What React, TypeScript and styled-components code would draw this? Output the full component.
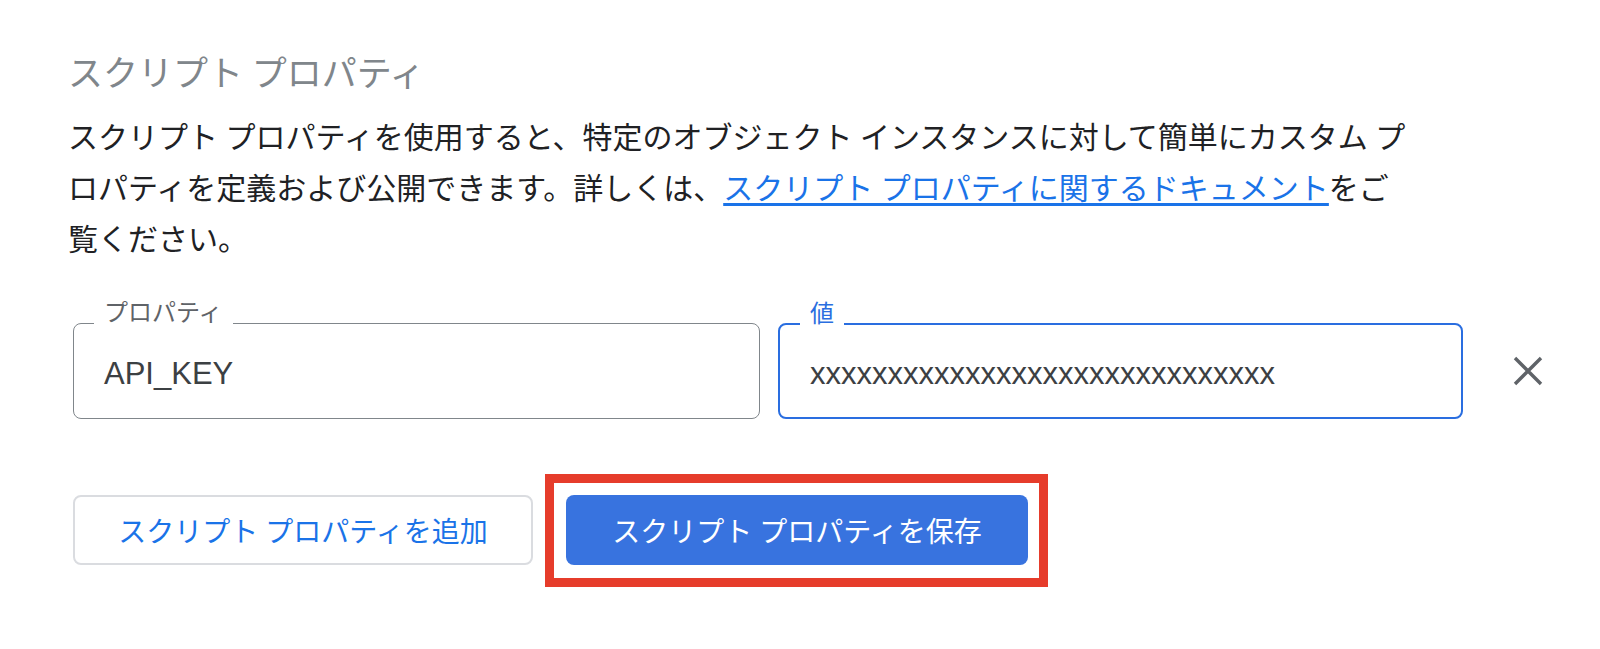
import React from 'react';
import styled, { createGlobalStyle } from 'styled-components';

const GlobalStyle = createGlobalStyle`
  body {
    margin: 0;
    background: #ffffff;
    font-family: Roboto, "Noto Sans CJK JP", sans-serif;
  }
`;

const Page = styled.div`
  box-sizing: border-box;
  min-height: 649px;
  padding: 54px 0 60px 68px;
`;

const Title = styled.h2`
  margin: 0;
  font-size: 35px;
  font-weight: 400;
  line-height: 1.2;
  color: #80868b;
`;

const Description = styled.p`
  margin: 16px 0 0;
  width: 1350px;
  font-size: 30px;
  line-height: 51px;
  color: #202124;
`;

const DocLink = styled.a`
  color: #1a73e8;
  text-decoration: underline;
  text-underline-offset: 4px;
`;

const FieldRow = styled.div`
  display: flex;
  align-items: center;
  margin: 58px 0 0 5px;
`;

const Field = styled.div<{ $focused?: boolean }>`
  position: relative;
  box-sizing: border-box;
  width: ${(p) => (p.$focused ? '685px' : '687px')};
  height: 96px;
  margin-right: ${(p) => (p.$focused ? '0' : '18px')};
  border: ${(p) => (p.$focused ? '2px solid #2a6ee0' : '1px solid #80868b')};
  border-radius: 8px;
  display: flex;
  align-items: center;
  padding: 5px 30px 0;
  font-family: "Liberation Sans", Arial, sans-serif;
  font-size: 31px;
  color: #3c4043;
`;

const FieldLabel = styled.span<{ $focused?: boolean }>`
  position: absolute;
  top: -23px;
  left: 20px;
  padding: 0 10px;
  background: #ffffff;
  font-family: Roboto, "Noto Sans CJK JP", sans-serif;
  font-size: 24px;
  line-height: 24px;
  color: ${(p) => (p.$focused ? '#2a6ee0' : '#5f6368')};
`;

const RemoveButton = styled.button`
  margin-left: 50px;
  padding: 0;
  border: none;
  background: none;
  display: flex;
  cursor: pointer;
`;

const ButtonRow = styled.div`
  display: flex;
  gap: 33px;
  margin: 76px 0 0 5px;
`;

const Button = styled.button<{ $primary?: boolean }>`
  box-sizing: border-box;
  width: ${(p) => (p.$primary ? '462px' : '460px')};
  height: 70px;
  border-radius: 8px;
  border: ${(p) => (p.$primary ? 'none' : '2px solid #dadce0')};
  background: ${(p) => (p.$primary ? '#3873df' : '#ffffff')};
  color: ${(p) => (p.$primary ? '#ffffff' : '#1a73e8')};
  font-family: Roboto, "Noto Sans CJK JP", sans-serif;
  font-size: 28px;
  cursor: pointer;
`;

const Highlight = styled.div`
  position: relative;
  display: flex;

  &::after {
    content: '';
    position: absolute;
    top: -21px;
    left: -21px;
    right: -20px;
    bottom: -22px;
    border: 9px solid #e63c2b;
    pointer-events: none;
  }
`;

const CloseIcon = () => (
  <svg width="30" height="30" viewBox="0 0 30 30">
    <path d="M2 2 L28 28 M28 2 L2 28" stroke="#5f6368" strokeWidth="3.4" fill="none" />
  </svg>
);

export default function App() {
  return (
    <Page>
      <GlobalStyle />
      <Title>スクリプト プロパティ</Title>
      <Description>
        スクリプト プロパティを使用すると、特定のオブジェクト インスタンスに対して簡単にカスタム プロパティを定義および公開できます。詳しくは、
        <DocLink href="#">スクリプト プロパティに関するドキュメント</DocLink>
        をご覧ください。
      </Description>
      <FieldRow>
        <Field>
          <FieldLabel>プロパティ</FieldLabel>
          API_KEY
        </Field>
        <Field $focused>
          <FieldLabel $focused>値</FieldLabel>
          xxxxxxxxxxxxxxxxxxxxxxxxxxxxxx
        </Field>
        <RemoveButton aria-label="削除">
          <CloseIcon />
        </RemoveButton>
      </FieldRow>
      <ButtonRow>
        <Button>スクリプト プロパティを追加</Button>
        <Highlight>
          <Button $primary>スクリプト プロパティを保存</Button>
        </Highlight>
      </ButtonRow>
    </Page>
  );
}
